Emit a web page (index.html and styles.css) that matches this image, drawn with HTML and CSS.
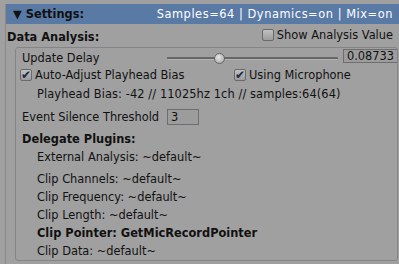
FILE: index.html
```html
<!DOCTYPE html>
<html>
  <head>
    <title>Settings</title>
    <link rel="stylesheet" href="styles.css">
  </head>
  <body>
    <div class="inspector">
      <div class="header">
        <span class="header-title">&#9660; Settings:</span>
        <span class="header-summary">Samples=64 | Dynamics=on | Mix=on</span>
      </div>

      <div class="section-row">
        <span class="section-title">Data Analysis:</span>
        <label class="check show"><span class="box"></span>Show Analysis Value</label>
      </div>

      <div class="group">
        <div class="row update">
          <span class="label">Update Delay</span>
          <div class="slider">
            <div class="track"></div>
            <div class="thumb"></div>
          </div>
          <div class="field number">0.08733</div>
        </div>

        <div class="row checks">
          <label class="check wide"><span class="box checked">&#10004;</span>Auto-Adjust Playhead Bias</label>
          <label class="check"><span class="box checked">&#10004;</span>Using Microphone</label>
        </div>

        <div class="row info">Playhead Bias: -42 // 11025hz 1ch // samples:64(64)</div>

        <div class="row event">
          <span class="label">Event Silence Threshold</span>
          <div class="field small">3</div>
        </div>

        <div class="row sub-title">Delegate Plugins:</div>
        <div class="plugins">
          <div class="plugin first">External Analysis: ~default~</div>
          <div class="plugin">Clip Channels: ~default~</div>
          <div class="plugin">Clip Frequency: ~default~</div>
          <div class="plugin">Clip Length: ~default~</div>
          <div class="plugin bold">Clip Pointer: GetMicRecordPointer</div>
          <div class="plugin">Clip Data: ~default~</div>
        </div>
      </div>
    </div>
  </body>
</html>
```

FILE: styles.css
```css
body {
  margin: 0;
  background: #a0a0a0;
  font-family: 'DejaVu Sans', Verdana, sans-serif;
  font-size: 11.4px;
  color: #111;
  width: 399px;
  height: 264px;
  overflow: hidden;
}

.inspector {
  margin: 4px 0 0 5px;
  border-left: 1px solid #8a8a8a;
  height: 260px;
}

.header {
  display: flex;
  justify-content: space-between;
  align-items: center;
  height: 20px;
  background: #5a7aa6;
  color: #fff;
  padding: 0 6px 0 7px;
  white-space: nowrap;
}

.header-title {
  font-weight: bold;
  color: #111;
}

.header-summary {
  letter-spacing: 0.55px;
}

.section-row {
  display: flex;
  justify-content: space-between;
  height: 23px;
  padding: 0 6px 0 1px;
}

.section-title {
  font-weight: bold;
  align-self: flex-end;
  line-height: 14px;
  padding-bottom: 3px;
}

.sub-title {
  font-weight: bold;
}

.check {
  display: flex;
  align-items: center;
  gap: 3px;
  white-space: nowrap;
}

.check.show {
  align-self: flex-start;
  margin-top: 5px;
  height: 12px;
}

.box {
  width: 10px;
  height: 10px;
  border: 1px solid #6a6a6a;
  border-radius: 2px;
  background: linear-gradient(#c0c0c0, #9c9c9c);
  color: #1a2a48;
  font-size: 12px;
  line-height: 10px;
  text-align: center;
  flex: none;
}

.group {
  margin: 0 1px 0 9px;
  border: 1px solid #858585;
  border-radius: 3px;
  height: 212px;
  padding: 0 0 0 6px;
  overflow: hidden;
}

.row {
  display: flex;
  align-items: center;
  white-space: nowrap;
}

.row .label {
  width: 145px;
  flex: none;
}

.update {
  height: 20px;
}

.slider {
  position: relative;
  width: 171px;
  height: 20px;
  flex: none;
}

.track {
  position: absolute;
  left: 0;
  right: 0;
  top: 9px;
  height: 2px;
  background: #666;
  border-bottom: 1px solid #b2b2b2;
  border-radius: 1px;
}

.thumb {
  position: absolute;
  left: 47px;
  top: 5px;
  width: 9px;
  height: 9px;
  border-radius: 50%;
  background: radial-gradient(circle at 40% 35%, #e6e6e6, #a0a0a0);
  border: 1px solid #666;
}

.field {
  border: 1px solid #6e6e6e;
  background: #9c9c9c;
  line-height: 14px;
  padding: 0 3px;
  box-sizing: border-box;
  overflow: hidden;
  white-space: nowrap;
  flex: none;
}

.number {
  align-self: flex-start;
  margin: 1px 0 0 5px;
  width: 58px;
  height: 14px;
  line-height: 12px;
}

.small {
  width: 32px;
  height: 16px;
}

.checks {
  height: 14px;
  margin-left: -2px;
}

.check.wide {
  width: 214px;
}

.info {
  height: 24px;
  padding-left: 15px;
  letter-spacing: 0.1px;
}

.event {
  height: 22px;
}

.sub-title {
  height: 18px;
  margin-top: 2px;
}

.plugins {
  padding-left: 15px;
}

.plugin {
  height: 18px;
  line-height: 18px;
  white-space: nowrap;
}

.plugin.first {
  margin-bottom: 4px;
}

.bold {
  font-weight: bold;
}
```
